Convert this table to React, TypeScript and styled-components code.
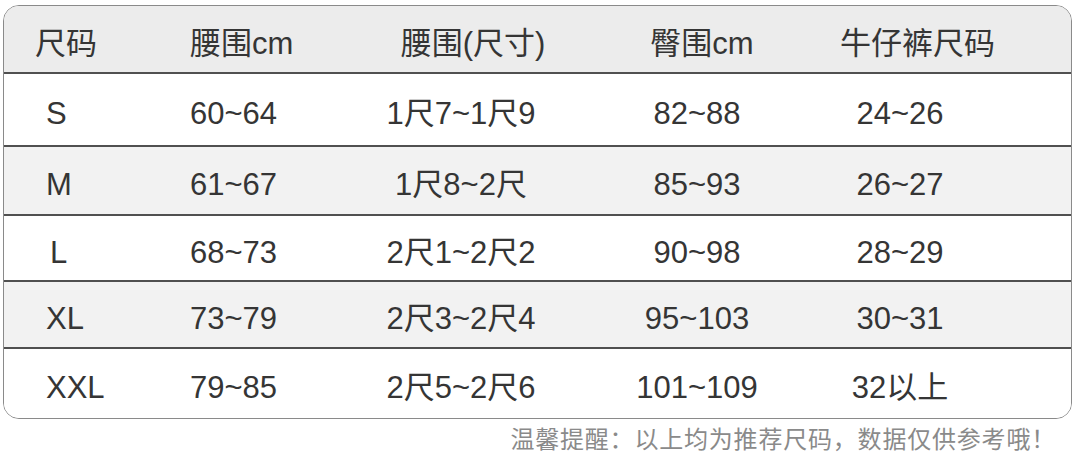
import React from 'react'
import styled, { createGlobalStyle } from 'styled-components'

const GlobalStyle = createGlobalStyle`
  html, body {
    margin: 0;
    padding: 0;
    background: #ffffff;
  }
  body {
    font-family: "Liberation Sans", "Noto Sans CJK SC", sans-serif;
    color: #353535;
  }
`

const Page = styled.div`
  width: 1080px;
  height: 462px;
  padding: 5px 8px 0 3px;
  box-sizing: border-box;
  display: flex;
  flex-direction: column;
`

const Table = styled.div`
  border: 1.5px solid #8a8a8a;
  border-radius: 16px;
  overflow: hidden;
  display: flex;
  flex-direction: column;
`

const Row = styled.div<{ $shade?: boolean; $height: number; $last?: boolean }>`
  display: grid;
  grid-template-columns: 116px 236px 210px 262px 144px 1fr;
  align-items: center;
  box-sizing: border-box;
  padding-top: 8px;
  height: ${(p) => p.$height}px;
  background: ${(p) => (p.$shade ? '#f2f2f2' : '#ffffff')};
  border-bottom: ${(p) => (p.$last ? 'none' : '2px solid #505050')};
`

const HeaderRow = styled(Row)`
  background: #ececec;
  padding-top: 9px;
`

const Cell = styled.div<{ $left?: number; $shift?: number }>`
  text-align: ${(p) => (p.$left !== undefined ? 'left' : 'center')};
  padding-left: ${(p) => p.$left ?? 0}px;
  font-size: 31px;
  line-height: 1;
  white-space: nowrap;
  transform: translateX(${(p) => p.$shift ?? 0}px);
`

const Note = styled.div`
  align-self: flex-end;
  margin-top: 1px;
  margin-right: 16px;
  font-size: 24px;
  letter-spacing: 0.8px;
  color: #8a8a8a;
`

type SizeRow = {
  size: string
  waist: string
  chi: string
  hip: string
  jeans: string
  height: number
}

const rows: SizeRow[] = [
  { size: 'S', waist: '60~64', chi: '1尺7~1尺9', hip: '82~88', jeans: '24~26', height: 73 },
  { size: 'M', waist: '61~67', chi: '1尺8~2尺', hip: '85~93', jeans: '26~27', height: 69 },
  { size: 'L', waist: '68~73', chi: '2尺1~2尺2', hip: '90~98', jeans: '28~29', height: 66 },
  { size: 'XL', waist: '73~79', chi: '2尺3~2尺4', hip: '95~103', jeans: '30~31', height: 67 },
  { size: 'XXL', waist: '79~85', chi: '2尺5~2尺6', hip: '101~109', jeans: '32以上', height: 69 },
]

export default function App() {
  return (
    <Page>
      <GlobalStyle />
      <Table>
        <HeaderRow $height={68}>
          <Cell $left={31}>尺码</Cell>
          <Cell $left={70}>腰围cm</Cell>
          <Cell $shift={12}>腰围(尺寸)</Cell>
          <Cell $shift={5}>臀围cm</Cell>
          <Cell $shift={12}>牛仔裤尺码</Cell>
        </HeaderRow>
        {rows.map((r, i) => (
          <Row key={r.size} $height={r.height} $shade={i % 2 === 1} $last={i === rows.length - 1}>
            <Cell $left={r.size === 'L' ? 46 : 42}>{r.size}</Cell>
            <Cell $left={70}>{r.waist}</Cell>
            <Cell>{r.chi}</Cell>
            <Cell>{r.hip}</Cell>
            <Cell>{r.jeans}</Cell>
          </Row>
        ))}
      </Table>
      <Note>温馨提醒：以上均为推荐尺码，数据仅供参考哦！</Note>
    </Page>
  )
}
